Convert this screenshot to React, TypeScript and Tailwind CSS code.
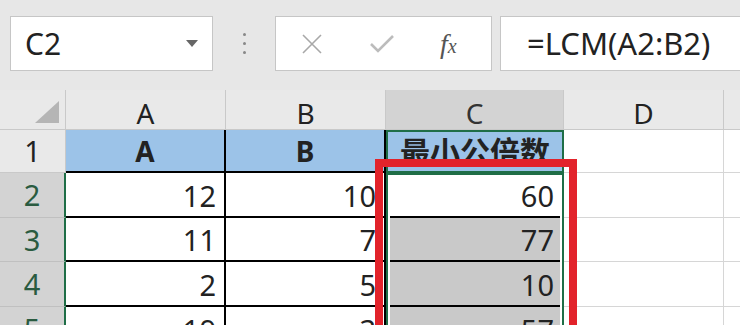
const green = "border-[#1f6e47]";

const rows = [
  { n: 2, a: "12", b: "10", c: "60" },
  { n: 3, a: "11", b: "7", c: "77" },
  { n: 4, a: "2", b: "5", c: "10" },
  { n: 5, a: "19", b: "3", c: "57" },
];

function Toolbar() {
  return (
    <div className="flex h-[90px] items-start bg-[#e7e7e7] pt-[16px]">
      {/* name box */}
      <div className="ml-[10px] flex h-[55px] w-[203px] items-center justify-between border border-[#c6c6c6] bg-white pl-[14px] pr-[14px]">
        <span className="text-[30px] leading-none text-[#222]">C2</span>
        <svg width="12" height="7" viewBox="0 0 12 7">
          <path d="M0 0 L12 0 L6 7 Z" fill="#666" />
        </svg>
      </div>
      <div className="flex h-[55px] w-[62px] flex-col items-center justify-center gap-[6px]">
        <span className="h-[3px] w-[3px] rounded-full bg-[#888]" />
        <span className="h-[3px] w-[3px] rounded-full bg-[#888]" />
        <span className="h-[3px] w-[3px] rounded-full bg-[#888]" />
      </div>
      {/* cancel / enter / fx */}
      <div className="flex h-[55px] w-[217px] items-center border border-[#c6c6c6] bg-white">
        <svg className="ml-[26px]" width="20" height="20" viewBox="0 0 20 20">
          <path d="M1 1 L19 19 M19 1 L1 19" stroke="#a8a8a8" strokeWidth="1.6" fill="none" />
        </svg>
        <svg className="ml-[48px]" width="24" height="18" viewBox="0 0 24 18">
          <path d="M1 9 L8 16 L23 1" stroke="#bcbcbc" strokeWidth="2.6" fill="none" />
        </svg>
        <span className="ml-[46px] font-['Liberation_Serif',serif] text-[28px] italic leading-none text-[#555]">
          f<span className="text-[20px]">x</span>
        </span>
      </div>
      <div className="ml-[8px] flex h-[55px] flex-1 items-center border border-r-0 border-[#c6c6c6] bg-white pl-[26px]">
        <span className="text-[31px] leading-none text-[#222]">=LCM(A2:B2)</span>
      </div>
    </div>
  );
}

export default function App() {
  return (
    <div className="relative h-[325px] w-[740px] overflow-hidden bg-[#e7e7e7] font-['Noto_Sans','Noto_Sans_CJK_SC',sans-serif]">
      <Toolbar />
      <div className="grid grid-cols-[66px_160px_160px_178px_160px_1fr] grid-rows-[40px_43px_45px_44px_45px_45px] text-[#222]">
        {/* header row */}
        <div className="flex items-end justify-end border-b border-r border-[#c9c9c9] bg-[#e9e9e9] pb-[6px] pr-[6px]">
          <svg width="24" height="22" viewBox="0 0 24 22">
            <path d="M24 0 L24 22 L0 22 Z" fill="#b5b5b5" />
          </svg>
        </div>
        <div className="flex items-center justify-center border-b border-r border-[#c9c9c9] bg-[#e9e9e9] pt-[6px] text-[28px]">A</div>
        <div className="flex items-center justify-center border-b border-r border-[#c9c9c9] bg-[#e9e9e9] pt-[6px] text-[28px]">B</div>
        <div className="flex items-center justify-center border-b border-r border-[#c9c9c9] bg-[#d3d3d3] pt-[6px] text-[28px] text-[#333]">C</div>
        <div className="flex items-center justify-center border-b border-r border-[#c9c9c9] bg-[#e9e9e9] pt-[6px] text-[28px]">D</div>
        <div className="border-b border-[#c9c9c9] bg-[#e9e9e9]" />

        {/* row 1 */}
        <div className="flex items-center justify-center border-b border-r border-[#c9c9c9] bg-[#e9e9e9] text-[29px]">1</div>
        <div className="flex items-center justify-center border-b-2 border-r-2 border-black bg-[#9cc3e8] text-[28px] font-bold">A</div>
        <div className="flex items-center justify-center border-b-2 border-r-2 border-black bg-[#9cc3e8] text-[28px] font-bold">B</div>
        <div className={`flex items-center justify-center border-2 ${green} bg-[#9cc3e8] text-[30px] font-bold leading-none`}>最小公倍数</div>
        <div className="border-b border-r border-[#d6d6d6] bg-white" />
        <div className="border-b border-[#d6d6d6] bg-white" />

        {rows.map((r) => (
          <div key={r.n} className="contents">
            <div className={`flex items-center justify-center border-b border-r-2 border-b-[#c0c0c0] ${green} bg-[#d3d3d3] text-[29px] text-[#2a5b40]`}>
              {r.n}
            </div>
            <div className="flex items-end justify-end border-b-2 border-r-2 border-black bg-white pb-[6px] pr-[8px] text-[29px] leading-none">
              {r.a}
            </div>
            <div className="flex items-end justify-end border-b-2 border-r-2 border-black bg-white pb-[6px] pr-[8px] text-[29px] leading-none">
              {r.b}
            </div>
            <div className={`flex border-x-2 ${green} bg-white px-[2px] ${r.n === 2 ? "border-t-2" : ""}`}>
              <div
                className={`flex flex-1 items-end justify-end border-b-2 border-black pb-[6px] pr-[6px] text-[29px] leading-none ${
                  r.n === 2 ? "bg-white" : "bg-[#c9c9c9]"
                }`}
              >
                {r.c}
              </div>
            </div>
            <div className="border-b border-r border-[#d6d6d6] bg-white" />
            <div className="border-b border-[#d6d6d6] bg-white" />
          </div>
        ))}
      </div>
      {/* red highlight box */}
      <div className="absolute left-[375px] top-[159px] h-[200px] w-[202px] border-[8px] border-[#e2232b]" />
    </div>
  );
}
